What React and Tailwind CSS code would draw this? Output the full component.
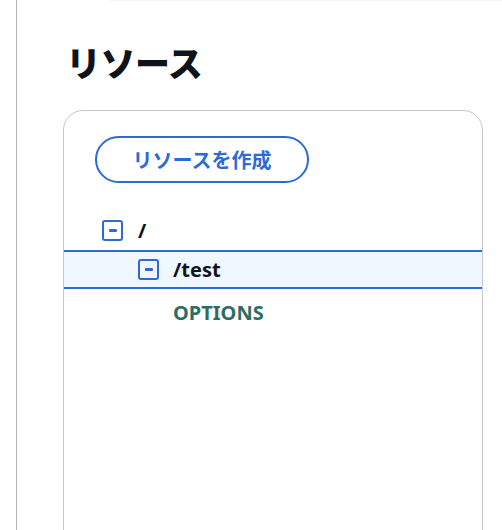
import React from "react";

function MinusBox() {
  return (
    <span className="w-[21px] h-[21px] border-2 border-[#2e6ad5] rounded-[3px] flex items-center justify-center shrink-0">
      <span className="w-[8px] h-[3px] bg-[#2e6ad5] rounded-[1px]" />
    </span>
  );
}

export default function App() {
  return (
    <div
      className="w-[502px] h-[530px] bg-white overflow-hidden flex text-[#0f141a]"
      style={{ fontFamily: '"Noto Sans", "Noto Sans CJK JP", sans-serif' }}
    >
      <div className="w-4 shrink-0" />
      <div className="w-px shrink-0 bg-[#b4b4bb]" />
      <div className="flex-1 flex flex-col pl-[46px]">
        <div className="h-px shrink-0 bg-[#f6f6f7] ml-[47px]" />
        <h1
          className="mt-[43px] text-[35px] leading-[35px] font-black tracking-[-0.5px] pl-[3px]"
          style={{ fontFamily: '"Noto Sans CJK JP", sans-serif' }}
        >
          リソース
        </h1>
        <div className="mt-[31px] shrink-0 w-[420px] h-[600px] border border-[#c6c6cd] rounded-[20px] flex flex-col">
          <div className="pt-[25px] pl-[31px]">
            <button
              className="w-[214px] h-[47px] rounded-full border-2 border-[#2e6ad5] text-[#2e6ad5] text-[20px] font-bold flex items-center justify-center"
              style={{ fontFamily: '"Noto Sans CJK JP", sans-serif' }}
            >
              リソースを作成
            </button>
          </div>
          <div className="mt-[28px] flex flex-col">
            <div className="h-[39px] flex items-center pl-[38px] gap-[15px]">
              <MinusBox />
              <span className="text-[20px] font-bold">/</span>
            </div>
            <div className="h-[39px] border-y-2 border-[#2e6ad5] bg-[#f0f8ff] flex items-center pl-[74px] gap-[14px]">
              <MinusBox />
              <span className="text-[20px] font-bold">/test</span>
            </div>
            <div className="h-[47px] flex items-center pl-[109px]">
              <span className="text-[20px] font-bold text-[#2f6d61]">OPTIONS</span>
            </div>
          </div>
        </div>
      </div>
    </div>
  );
}
